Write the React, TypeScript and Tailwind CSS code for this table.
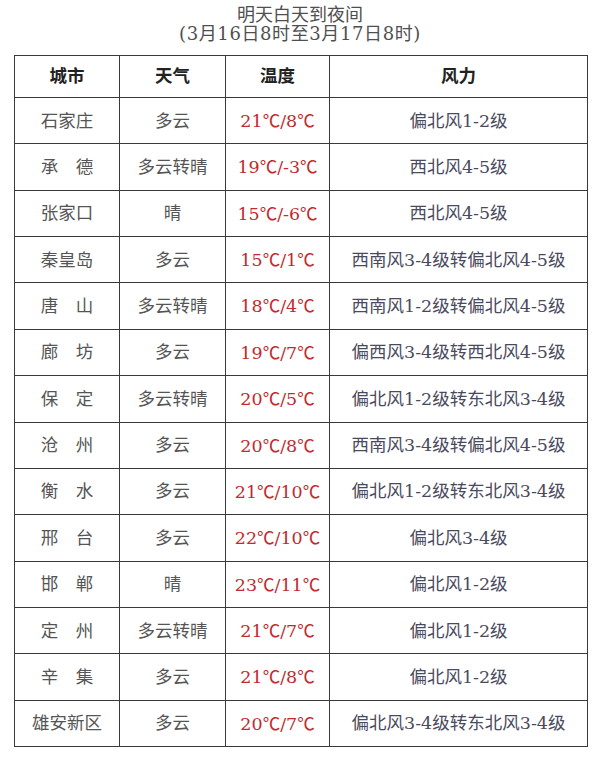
const rows: [string, string, string, string][] = [
  ["石家庄", "多云", "21℃/8℃", "偏北风1-2级"],
  ["承　德", "多云转晴", "19℃/-3℃", "西北风4-5级"],
  ["张家口", "晴", "15℃/-6℃", "西北风4-5级"],
  ["秦皇岛", "多云", "15℃/1℃", "西南风3-4级转偏北风4-5级"],
  ["唐　山", "多云转晴", "18℃/4℃", "西南风1-2级转偏北风4-5级"],
  ["廊　坊", "多云", "19℃/7℃", "偏西风3-4级转西北风4-5级"],
  ["保　定", "多云转晴", "20℃/5℃", "偏北风1-2级转东北风3-4级"],
  ["沧　州", "多云", "20℃/8℃", "西南风3-4级转偏北风4-5级"],
  ["衡　水", "多云", "21℃/10℃", "偏北风1-2级转东北风3-4级"],
  ["邢　台", "多云", "22℃/10℃", "偏北风3-4级"],
  ["邯　郸", "晴", "23℃/11℃", "偏北风1-2级"],
  ["定　州", "多云转晴", "21℃/7℃", "偏北风1-2级"],
  ["辛　集", "多云", "21℃/8℃", "偏北风1-2级"],
  ["雄安新区", "多云", "20℃/7℃", "偏北风3-4级转东北风3-4级"],
]

// ℃ is drawn from the CJK font so it keeps its full width
function Temp({ value }: { value: string }) {
  const parts = value.split("℃")
  return (
    <>
      {parts.map((p, i) => (
        <span key={i}>
          {p}
          {i < parts.length - 1 && <span className="font-['Noto_Sans_CJK_SC']">℃</span>}
        </span>
      ))}
    </>
  )
}

export default function App() {
  return (
    <div className="w-[600px] h-[775px] bg-white pt-[5px]">
      {/* Title */}
      <div
        className="text-center text-[18px] leading-[19px] text-[#4f4f4f]"
        style={{ fontFamily: '"DejaVu Serif", "Noto Sans CJK SC", serif' }}
      >
        <div>明天白天到夜间</div>
        <div className="tracking-[0.6px]">(3月16日8时至3月17日8时)</div>
      </div>

      {/* Table */}
      <table
        className="mt-[12px] ml-[14px] w-[573px] border-collapse table-fixed text-[17.5px]"
        style={{ fontFamily: '"DejaVu Serif", "Noto Sans CJK SC", serif' }}
      >
        <colgroup>
          <col className="w-[105px]" />
          <col className="w-[106px]" />
          <col className="w-[104px]" />
          <col className="w-[258px]" />
        </colgroup>
        <thead>
          <tr className="h-[42px]">
            {["城市", "天气", "温度", "风力"].map((h) => (
              <th key={h} className="border border-[#3a3a3a] font-bold text-[#222] text-center align-middle p-0">
                {h}
              </th>
            ))}
          </tr>
        </thead>
        <tbody>
          {rows.map(([city, weather, temp, wind]) => (
            <tr key={city} className="h-[46.36px]">
              <td className="border border-[#3a3a3a] text-center align-middle text-[#555] p-0">{city}</td>
              <td className="border border-[#3a3a3a] text-center align-middle text-[#555] p-0">{weather}</td>
              <td className="border border-[#3a3a3a] text-center align-middle text-[#c22a2e] p-0">
                <Temp value={temp} />
              </td>
              <td className="border border-[#3a3a3a] text-center align-middle text-[#4a4a5e] p-0">{wind}</td>
            </tr>
          ))}
        </tbody>
      </table>
    </div>
  )
}
